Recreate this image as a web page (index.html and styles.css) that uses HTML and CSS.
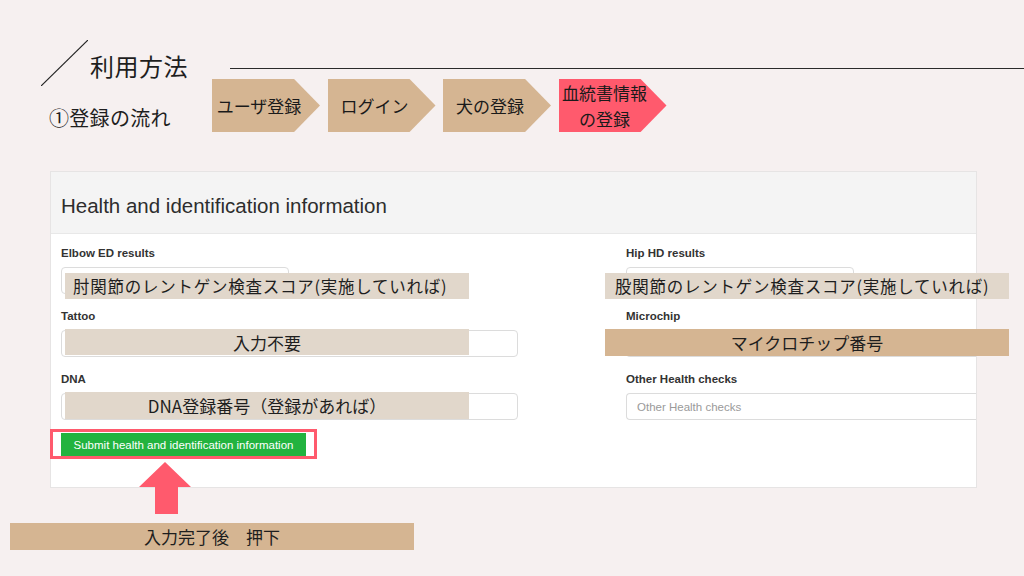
FILE: index.html
```html
<!DOCTYPE html>
<html lang="ja">
<head>
<meta charset="utf-8">
<title>利用方法</title>
<link rel="stylesheet" href="styles.css">
</head>
<body>
<div class="page">
  <div class="title-row">
    <svg class="slash" width="47" height="46" viewBox="0 0 47 46"><line x1="0" y1="46" x2="47" y2="0" stroke="#222" stroke-width="1.2"/></svg>
    <h1 class="title">利用方法</h1>
    <div class="rule"></div>
  </div>
  <div class="flow-row">
    <div class="subtitle">①登録の流れ</div>
    <div class="steps">
      <div class="step">ユーザ登録</div>
      <div class="step">ログイン</div>
      <div class="step">犬の登録</div>
      <div class="step step-active">血統書情報<br>の登録</div>
    </div>
  </div>

  <div class="card">
    <div class="card-head">Health and identification information</div>
    <div class="card-body">
      <div class="col">
        <div class="field">
          <label class="label">Elbow ED results</label>
          <div class="control">
            <input class="input input-short" type="text">
            <span class="note note-light note-left note-low note-start">肘関節のレントゲン検査スコア(実施していれば)</span>
          </div>
        </div>
        <div class="field">
          <label class="label">Tattoo</label>
          <div class="control">
            <input class="input input-long" type="text">
            <span class="note note-light note-left note-up">入力不要</span>
          </div>
        </div>
        <div class="field field-last">
          <label class="label">DNA</label>
          <div class="control">
            <input class="input input-long" type="text">
            <span class="note note-light note-left note-up note-tall">DNA登録番号（登録があれば）</span>
          </div>
        </div>
        <div class="submit-wrap">
          <button class="submit" type="button">Submit health and identification information</button>
        </div>
      </div>
      <div class="col">
        <div class="field">
          <label class="label">Hip HD results</label>
          <div class="control">
            <input class="input input-short" type="text">
            <span class="note note-light note-right note-low note-start note-start-r">股関節のレントゲン検査スコア(実施していれば)</span>
          </div>
        </div>
        <div class="field">
          <label class="label">Microchip</label>
          <div class="control">
            <input class="input input-cut" type="text">
            <span class="note note-tan note-right note-up note-tall">マイクロチップ番号</span>
          </div>
        </div>
        <div class="field">
          <label class="label">Other Health checks</label>
          <div class="control">
            <input class="input input-cut" type="text" placeholder="Other Health checks">
          </div>
        </div>
      </div>
    </div>
  </div>

  <svg class="arrow" width="52" height="52" viewBox="0 0 52 52"><polygon points="26,0 52,25 39,25 39,52 16,52 16,25 0,25" fill="#ff5a6d"/></svg>

  <div class="bottom-note">入力完了後　押下</div>
</div>
</body>
</html>
```

FILE: styles.css
```css
* { box-sizing: border-box; }

html, body {
  margin: 0;
  padding: 0;
}

body {
  background: #f6f0f0;
  font-family: "Noto Sans CJK JP", "Noto Sans", sans-serif;
  color: #1e1e1e;
}

.page {
  position: relative;
  width: 1024px;
  height: 576px;
  overflow: hidden;
  padding-top: 40px;
}

.title-row {
  display: flex;
  align-items: flex-start;
  height: 46px;
  padding-left: 41px;
}

.slash {
  flex: none;
  display: block;
}

.title {
  margin: 14px 0 0 2px;
  font-size: 24px;
  line-height: 1;
  font-weight: 400;
  letter-spacing: 0.5px;
}

.rule {
  flex: 1;
  height: 1px;
  background: #2a2a2a;
  margin: 28px 0 0 42px;
}

.flow-row {
  display: flex;
  align-items: flex-start;
  margin-top: -7px;
  padding-left: 49px;
}

.subtitle {
  width: 163px;
  margin-top: 29px;
  font-size: 20px;
  line-height: 1;
  letter-spacing: 0.3px;
}

.steps {
  display: flex;
  gap: 7.5px;
}

.step {
  width: 108px;
  height: 53px;
  background: #d5b592;
  clip-path: polygon(0 0, 76% 0, 100% 50%, 76% 100%, 0 100%);
  display: flex;
  align-items: center;
  justify-content: center;
  text-align: center;
  padding-right: 14px;
  font-size: 17px;
  line-height: 26px;
  color: #1a1a1a;
}

.step-active {
  background: #ff5a6d;
  padding-right: 16px;
}

.card {
  margin: 39px 0 0 50px;
  width: 927px;
  border: 1px solid #e6e4e4;
  background: #fff;
  font-family: "Liberation Sans", Arial, sans-serif;
}

.card-head {
  height: 62px;
  background: #f4f4f4;
  border-bottom: 1px solid #e8e8e8;
  display: flex;
  align-items: center;
  padding: 6px 0 0 10px;
  font-size: 20.5px;
  color: #2d2d2d;
}

.card-body {
  display: grid;
  grid-template-columns: 565px 1fr;
  padding: 12px 0 28px 10px;
}

.field {
  margin-bottom: 15px;
}

.field-last {
  margin-bottom: 9px;
}

.label {
  display: block;
  font-size: 11.5px;
  font-weight: 700;
  line-height: 15px;
  margin-bottom: 6px;
  color: #333;
}

.control {
  position: relative;
}

.input {
  display: block;
  height: 27px;
  border: 1px solid #dcdcdc;
  border-radius: 4px;
  background: #fff;
  padding: 0 10px;
  font-family: "Liberation Sans", Arial, sans-serif;
  font-size: 11.5px;
  color: #333;
  outline: none;
}

.input::placeholder {
  color: #9a9a9a;
}

.input-short { width: 228px; }
.input-long { width: 457px; }
.input-cut {
  width: 100%;
  border-right: none;
  border-radius: 4px 0 0 4px;
}

.note {
  position: absolute;
  width: 404px;
  height: 26px;
  display: flex;
  align-items: center;
  justify-content: center;
  font-family: "Noto Sans CJK JP", sans-serif;
  font-size: 17px;
  color: #1e1e1e;
  white-space: nowrap;
}

.note-light { background: #e1d7cb; }
.note-tan { background: #d5b592; }
.note-left { left: 4px; }
.note-right { left: -21px; }
.note-low { top: 6px; }
.note-up { top: -1px; }
.note-tall { height: 27px; }
.note-start {
  justify-content: flex-start;
  padding-left: 8px;
  font-size: 16.5px;
  letter-spacing: 0.75px;
}
.note-start-r { padding-left: 10px; }

.submit-wrap {
  display: inline-block;
  justify-self: start;
  margin-left: -11px;
  border: 3px solid #ff5a6d;
  padding: 1px 8px 0 8px;
  line-height: 0;
}

.submit {
  height: 23px;
  width: 245px;
  border: none;
  background: #22b33f;
  color: #fff;
  font-family: "Liberation Sans", Arial, sans-serif;
  font-size: 11.5px;
  padding: 0;
  cursor: pointer;
}

.arrow {
  position: absolute;
  left: 139px;
  top: 462px;
}

.bottom-note {
  margin: 35px 0 0 10px;
  width: 404px;
  height: 27px;
  background: #d5b592;
  display: flex;
  align-items: center;
  justify-content: center;
  font-size: 17px;
  color: #1e1e1e;
}
```
